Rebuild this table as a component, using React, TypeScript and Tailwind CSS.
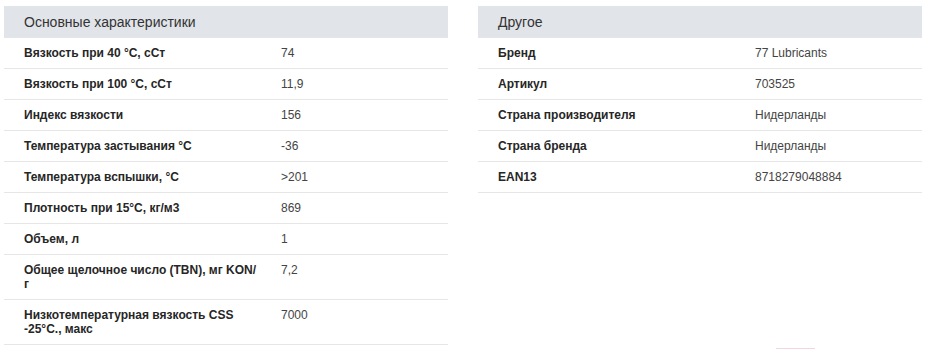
// Product spec tables: two side-by-side panels with a grey caption bar
// and label/value rows separated by hairlines.

type Row = { label: string; value: string };

const MAIN: Row[] = [
  { label: "Вязкость при 40 °С, сСт", value: "74" },
  { label: "Вязкость при 100 °С, сСт", value: "11,9" },
  { label: "Индекс вязкости", value: "156" },
  { label: "Температура застывания °С", value: "-36" },
  { label: "Температура вспышки, °С", value: ">201" },
  { label: "Плотность при 15°С, кг/м3", value: "869" },
  { label: "Объем, л", value: "1" },
  { label: "Общее щелочное число (TBN), мг KON/г", value: "7,2" },
  { label: "Низкотемпературная вязкость CSS -25°С., макс", value: "7000" },
];

const OTHER: Row[] = [
  { label: "Бренд", value: "77 Lubricants" },
  { label: "Артикул", value: "703525" },
  { label: "Страна производителя", value: "Нидерланды" },
  { label: "Страна бренда", value: "Нидерланды" },
  { label: "EAN13", value: "8718279048884" },
];

function SpecTable({ title, rows }: { title: string; rows: Row[] }) {
  return (
    <section className="w-[444px]">
      <h3 className="flex h-8 items-center bg-[#e1e4e9] pl-5 text-[14px] font-normal text-[#333]">
        {title}
      </h3>
      {rows.map((r) => (
        <div
          key={r.label}
          className="flex border-b border-[#e6e6e6] py-2 text-[12px] leading-[14px]"
        >
          <div className="w-[277px] pl-5 pr-5 font-bold text-[#262626]">
            {r.label}
          </div>
          <div className="flex-1 text-[#444]">{r.value}</div>
        </div>
      ))}
    </section>
  );
}

export default function App() {
  return (
    <div className="relative h-[352px] w-[928px] bg-white font-['Liberation_Sans',Arial,sans-serif]">
      <div className="flex gap-[30px] pl-1 pt-1.5">
        <SpecTable title="Основные характеристики" rows={MAIN} />
        <SpecTable title="Другое" rows={OTHER} />
      </div>
      <div className="absolute left-[776px] top-[348px] h-px w-[39px] bg-[#f3d6dc]" />
    </div>
  );
}
